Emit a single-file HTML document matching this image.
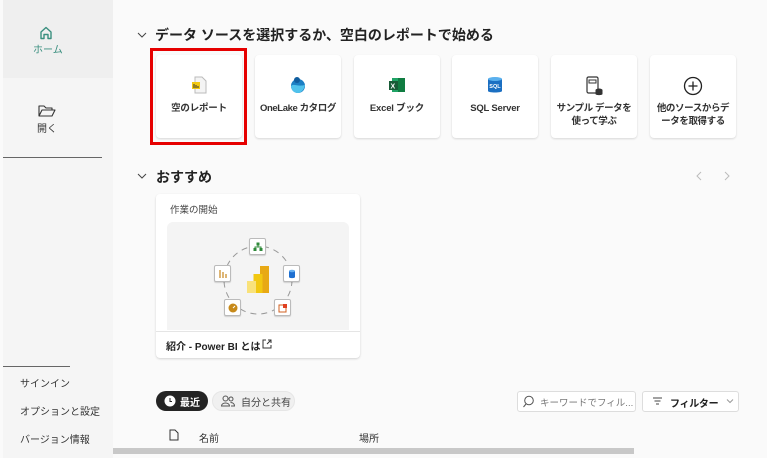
<!DOCTYPE html>
<html><head><meta charset="utf-8">
<style>
*{margin:0;padding:0;box-sizing:border-box}
body{width:767px;height:458px;overflow:hidden;background:#fafafa;font-family:"Liberation Sans","Noto Sans CJK JP",sans-serif;color:#242424;position:relative}
.abs{position:absolute}
.side{left:3px;top:0;width:110px;height:458px;background:#f5f5f5}
.card{position:absolute;top:55px;width:86px;height:83px;background:#fff;border-radius:4px;box-shadow:0 1px 2px rgba(0,0,0,.14);font-size:9.5px;font-weight:bold;text-align:center;color:#333}
.card .ic{position:absolute;left:0;right:0;top:20px;height:22px;display:flex;justify-content:center}
.card .t{position:absolute;left:0;right:0;top:47px;line-height:13px;white-space:nowrap;letter-spacing:-0.2px}
.sm{font-size:10px;color:#333}
.node{position:absolute;width:17px;height:17px;background:#fff;border:1px solid #bbb;border-radius:2px;box-shadow:0 1px 1px rgba(0,0,0,.15)}
</style></head><body>
<div class="abs side"></div>
<div class="abs" style="left:3px;top:0;width:110px;height:78px;background:#efefef"></div>
<svg class="abs" style="left:38px;top:25px" width="16" height="16" viewBox="0 0 16 16"><path d="M3 7L8 2.5L13 7V13.5H10V9.5H6V13.5H3Z" fill="none" stroke="#3a8f7f" stroke-width="1.4" stroke-linejoin="round"/></svg>
<div class="abs" style="left:33px;top:41px;font-size:10px;color:#3a8f7f">ホーム</div>
<svg class="abs" style="left:38px;top:104px" width="18" height="14" viewBox="0 0 18 14"><path d="M1 12V2H6L8 4H14V6M1 12L4 6H17L14 12Z" fill="none" stroke="#333" stroke-width="1.1" stroke-linejoin="round"/></svg>
<div class="abs sm" style="left:37px;top:120px">開く</div>
<div class="abs" style="left:3px;top:157px;width:99px;height:1px;background:#666"></div>
<div class="abs" style="left:3px;top:366px;width:67px;height:1px;background:#666"></div>
<div class="abs sm" style="left:20px;top:375px">サインイン</div>
<div class="abs sm" style="left:20px;top:403px">オプションと設定</div>
<div class="abs sm" style="left:20px;top:431px">バージョン情報</div>

<svg class="abs" style="left:137px;top:30px" width="10" height="10"><path d="M1 3L5 7L9 3" fill="none" stroke="#444" stroke-width="1"/></svg>
<div class="abs" style="left:155px;top:25px;font-size:14px;font-weight:bold;color:#222">データ ソースを選択するか、空白のレポートで始める</div>

<div class="abs" style="left:150px;top:48px;width:97px;height:97px;border:3px solid #e60000"></div>
<div class="card" style="left:156px"><div class="ic"><svg width="20" height="20" viewBox="0 0 20 20"><path d="M6 2H13L17 6V18H6Z" fill="#f4f4f4" stroke="#bbb"/><rect x="3" y="7" width="8" height="7" fill="#f2c811"/><path d="M5 13V9M7 13V10M9 13V11" stroke="#333" stroke-width="1"/></svg></div><div class="t">空のレポート</div></div>
<div class="card" style="left:255px"><div class="ic"><svg width="20" height="20" viewBox="0 0 20 20"><circle cx="10" cy="11" r="7" fill="#1b7fc4"/><path d="M3 11C6 8 9 12 17 10C16 15 13 18 10 18C6 18 3 15 3 11Z" fill="#50c2ec"/><circle cx="9" cy="5" r="3" fill="#0f5c9e"/></svg></div><div class="t" style="letter-spacing:-0.4px">OneLake カタログ</div></div>
<div class="card" style="left:354px"><div class="ic"><svg width="20" height="20" viewBox="0 0 20 20"><rect x="5" y="3" width="13" height="14" fill="#21a366"/><rect x="11" y="3" width="7" height="14" fill="#107c41"/><rect x="2" y="6" width="9" height="9" fill="#185c37"/><text x="3.5" y="13.5" font-size="7" fill="#fff" font-family="Liberation Sans" font-weight="bold">X</text></svg></div><div class="t">Excel ブック</div></div>
<div class="card" style="left:452px"><div class="ic"><svg width="20" height="20" viewBox="0 0 20 20"><path d="M3 4V16C3 18 17 18 17 16V4Z" fill="#1b6fc2"/><ellipse cx="10" cy="4" rx="7" ry="2" fill="#5ab0ee"/><text x="4.3" y="13" font-size="5.5" fill="#fff" font-family="Liberation Sans" font-weight="bold">SQL</text></svg></div><div class="t">SQL Server</div></div>
<div class="card" style="left:551px"><div class="ic"><svg width="20" height="22" viewBox="0 0 20 22"><rect x="3" y="2" width="11" height="16" rx="1.5" fill="none" stroke="#333" stroke-width="1.2"/><rect x="5" y="5" width="7" height="3" fill="none" stroke="#333"/><ellipse cx="15" cy="15" rx="3.5" ry="1.5" fill="#333"/><path d="M11.5 15V19C11.5 20.5 18.5 20.5 18.5 19V15" fill="#333"/></svg></div><div class="t" style="letter-spacing:-0.4px">サンプル データを<br>使って学ぶ</div></div>
<div class="card" style="left:650px"><div class="ic"><svg width="22" height="22" viewBox="0 0 22 22"><circle cx="11" cy="11" r="8.5" fill="none" stroke="#222" stroke-width="1.3"/><path d="M11 6.5V15.5M6.5 11H15.5" stroke="#222" stroke-width="1.3"/></svg></div><div class="t" style="letter-spacing:-0.4px">他のソースからデ<br>ータを取得する</div></div>

<svg class="abs" style="left:137px;top:171px" width="10" height="10"><path d="M1 3L5 7L9 3" fill="none" stroke="#444" stroke-width="1"/></svg>
<div class="abs" style="left:156px;top:167px;font-size:14px;font-weight:bold;color:#222">おすすめ</div>
<svg class="abs" style="left:693px;top:170px" width="40" height="12"><path d="M8 2L4 6L8 10" fill="none" stroke="#bbb"/><path d="M32 2L36 6L32 10" fill="none" stroke="#bbb"/></svg>

<div class="abs" style="left:156px;top:194px;width:204px;height:164px;background:#fff;border-radius:4px;box-shadow:0 1px 2px rgba(0,0,0,.16)"></div>
<div class="abs" style="left:170px;top:202px;font-size:9.5px;color:#444">作業の開始</div>
<div class="abs" style="left:167px;top:222px;width:182px;height:108px;background:#f4f4f4;border-radius:6px 6px 0 0"></div>
<div class="abs" style="left:156px;top:331px;width:204px;height:1px;background:#e5e5e5"></div>
<svg class="abs" style="left:218px;top:240px" width="80" height="80"><circle cx="40" cy="40" r="34" fill="none" stroke="#999" stroke-dasharray="6 5"/></svg>
<div class="node" style="left:249px;top:238px"></div><svg class="abs" style="left:253px;top:242px" width="10" height="10"><rect x="3.5" y="0.5" width="3" height="3" fill="#2f8a3a"/><rect x="0.5" y="6" width="3" height="3" fill="#2f8a3a"/><rect x="6.5" y="6" width="3" height="3" fill="#2f8a3a"/><path d="M5 3V5M2 6V5H8V6" stroke="#2f8a3a" fill="none"/></svg>
<div class="node" style="left:214px;top:265px"></div><svg class="abs" style="left:218px;top:269px" width="10" height="10"><path d="M2 1V9M5 3V9M8 5V9" stroke="#c9861a" stroke-width="1.2"/></svg>
<div class="node" style="left:283px;top:265px"></div><svg class="abs" style="left:287px;top:269px" width="10" height="10"><path d="M2 2V8C2 9.5 8 9.5 8 8V2Z" fill="#1e6fd0"/><ellipse cx="5" cy="2" rx="3" ry="1.2" fill="#64aef0"/></svg>
<div class="node" style="left:224px;top:299px"></div><svg class="abs" style="left:228px;top:303px" width="10" height="10"><circle cx="5" cy="5" r="4.5" fill="#c78a1a"/><path d="M5 5L7 3" stroke="#fff"/></svg>
<div class="node" style="left:274px;top:299px"></div><svg class="abs" style="left:278px;top:303px" width="10" height="10"><rect x="1" y="2" width="7" height="7" fill="none" stroke="#d06020"/><rect x="5" y="1" width="4" height="4" fill="#e04020"/></svg>
<svg class="abs" style="left:247px;top:266px" width="22" height="28"><rect x="13" y="0" width="9" height="27" fill="#e8a915"/><rect x="6.5" y="8" width="9" height="19" fill="#f2c811"/><rect x="0" y="15" width="9" height="12" fill="#f9e27a"/></svg>
<div class="abs" style="left:166px;top:338px;font-size:10px;font-weight:bold;color:#222">紹介 - Power BI とは</div>
<svg class="abs" style="left:262px;top:339px" width="10" height="10"><path d="M4 1H1V9H9V6M6 1H9V4M9 1L5 5" fill="none" stroke="#333"/></svg>

<div class="abs" style="left:156px;top:391px;width:52px;height:20px;border-radius:10px;background:#242424"></div>
<svg class="abs" style="left:164px;top:395px" width="12" height="12"><circle cx="6" cy="6" r="5.5" fill="#fff"/><path d="M6 3V6.5H8" stroke="#242424" fill="none"/></svg>
<div class="abs" style="left:180px;top:394px;font-size:10px;font-weight:bold;color:#fff">最近</div>
<div class="abs" style="left:212px;top:391px;width:83px;height:20px;border-radius:10px;background:#f0f0f0;border:1px solid #e6e6e6"></div>
<svg class="abs" style="left:221px;top:395px" width="14" height="12"><circle cx="4.5" cy="3.5" r="2.5" fill="none" stroke="#555"/><path d="M0.5 11C0.5 7 8.5 7 8.5 11Z" fill="none" stroke="#555"/><circle cx="10" cy="4" r="2" fill="none" stroke="#555"/><path d="M9.5 7.5C12 7.5 13.5 9 13.5 11H10" fill="none" stroke="#555"/></svg>
<div class="abs" style="left:241px;top:394px;font-size:10px;color:#444">自分と共有</div>

<div class="abs" style="left:517px;top:391px;width:119px;height:21px;background:#fff;border:1px solid #ddd;border-radius:3px"></div>
<svg class="abs" style="left:523px;top:395px" width="12" height="13"><circle cx="6" cy="5.5" r="4.3" fill="none" stroke="#555"/><path d="M3 9L0.5 12" stroke="#555"/></svg>
<div class="abs" style="left:540px;top:395px;font-size:9.5px;color:#777">キーワードでフィル...</div>
<div class="abs" style="left:642px;top:391px;width:97px;height:21px;background:#fff;border:1px solid #ddd;border-radius:3px"></div>
<svg class="abs" style="left:652px;top:396px" width="11" height="10"><path d="M1 2H10M2.5 5H8.5M4 8H7" stroke="#444"/></svg>
<div class="abs" style="left:670px;top:395px;font-size:10px;font-weight:bold;color:#222;letter-spacing:-0.3px">フィルター</div>
<svg class="abs" style="left:726px;top:398px" width="8" height="6"><path d="M1 1.5L4 4.5L7 1.5" fill="none" stroke="#999"/></svg>

<svg class="abs" style="left:169px;top:429px" width="10" height="12"><path d="M1 1H6L9 4V11H1Z" fill="none" stroke="#333"/></svg>
<div class="abs" style="left:199px;top:430px;font-size:10px;color:#333">名前</div>
<div class="abs" style="left:359px;top:430px;font-size:10px;color:#333">場所</div>
<div class="abs" style="left:113px;top:448px;width:521px;height:6px;background:#c8c8c8"></div>
</body></html>
